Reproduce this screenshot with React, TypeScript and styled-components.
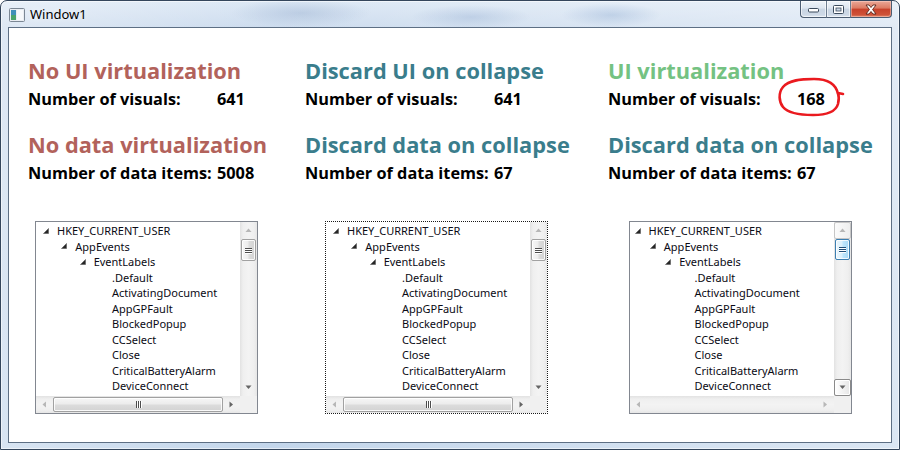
import React from 'react';
import styled, { createGlobalStyle, css } from 'styled-components';

const GlobalStyle = createGlobalStyle`
  html, body { margin: 0; padding: 0; background: #fff; }
  body { width: 900px; height: 450px; overflow: hidden; }
  * { box-sizing: border-box; }
`;

const HEAD_FONT = `"Open Sans", "Noto Sans", "DejaVu Sans", sans-serif`;
const TREE_FONT = `"Noto Sans", "Open Sans", "DejaVu Sans", sans-serif`;

type Tone = 'red' | 'teal' | 'green';
const toneColor: Record<Tone, string> = {
  red: '#b2625b',
  teal: '#3a7d8c',
  green: '#74c282',
};

/* ---------- window chrome ---------- */

const WindowFrame = styled.div`
  width: 900px;
  height: 450px;
  display: flex;
  flex-direction: column;
  border: 1px solid #34465c;
  border-radius: 7px 7px 0 0;
  overflow: hidden;
  background:
    radial-gradient(ellipse 70px 14px at 300px 12px, rgba(140, 165, 200, 0.35), transparent),
    radial-gradient(ellipse 60px 12px at 470px 16px, rgba(130, 160, 200, 0.3), transparent),
    radial-gradient(ellipse 50px 12px at 610px 14px, rgba(120, 155, 200, 0.3), transparent),
    linear-gradient(90deg, rgba(255, 255, 255, 0.35), rgba(255, 255, 255, 0) 30%, rgba(255, 255, 255, 0.25) 70%, rgba(255, 255, 255, 0.4)),
    linear-gradient(180deg, #dce8f5 0%, #cddcee 26px, #c3d6eb 100%);
  box-shadow: inset 0 0 0 1px rgba(255, 255, 255, 0.55);
`;

const TitleBar = styled.div`
  height: 26px;
  flex-shrink: 0;
  display: flex;
  align-items: flex-start;
  padding: 0 7px 0 8px;
`;

const AppIcon = styled.svg`
  width: 16px;
  height: 16px;
  margin-top: 6px;
  flex-shrink: 0;
`;

const TitleText = styled.span`
  margin: 4px 0 0 5px;
  font: 13px/18px ${TREE_FONT};
  color: #000;
  text-shadow: 0 0 6px rgba(255, 255, 255, 0.9);
`;

const CaptionButtons = styled.div`
  margin-left: auto;
  display: flex;
  height: 17px;
`;

type CaptionKind = 'min' | 'max' | 'close';
const CaptionButton = styled.div<{ $kind: CaptionKind }>`
  height: 17px;
  display: flex;
  align-items: center;
  justify-content: center;
  border: 1px solid #4b5c71;
  border-top: none;
  ${p =>
    p.$kind === 'close'
      ? css`
          width: 41px;
          border-left: none;
          border-radius: 0 0 4px 0;
          background: linear-gradient(180deg, #eaa898 0%, #dc7a62 45%, #c7412a 50%, #cf5238 85%, #e0886a 100%);
          box-shadow: inset 0 0 0 1px rgba(255, 220, 210, 0.45);
        `
      : css`
          width: ${p.$kind === 'min' ? 26 : 25}px;
          ${p.$kind === 'min' ? 'border-radius: 0 0 0 4px;' : 'border-left: 1px solid #6d7d90;'}
          ${p.$kind === 'max' ? 'border-right: 1px solid #6d7d90;' : 'border-right: none;'}
          background: linear-gradient(180deg, #eef3f9 0%, #dde6f0 45%, #c9d5e3 50%, #ced9e6 85%, #dde6f0 100%);
          box-shadow: inset 0 0 0 1px rgba(255, 255, 255, 0.6);
        `}
`;

const ClientArea = styled.main`
  flex: 1;
  margin: 0 7px 6px;
  background: #fff;
  border: 1px solid #5d6f84;
  padding: 30px 0 0 19px;
  display: grid;
  grid-template-columns: 237px 263px 264px;
  column-gap: 40px;
  align-content: start;
`;

/* ---------- stats ---------- */

const Column = styled.section`
  display: flex;
  flex-direction: column;
`;

const Heading = styled.h2<{ $tone: Tone; $gap: number }>`
  margin: ${p => p.$gap}px 0 0;
  font: 700 21.8px/26px ${HEAD_FONT};
  color: ${p => toneColor[p.$tone]};
  white-space: nowrap;
`;

const StatRow = styled.div`
  margin-top: 6px;
  display: grid;
  grid-template-columns: 189px auto;
  font: 700 16.3px/19px ${HEAD_FONT};
  color: #000;
  white-space: nowrap;
`;

const StatValue = styled.span`
  position: relative;
`;

const Annotation = styled.svg`
  position: absolute;
  left: -24px;
  top: -16px;
  width: 74px;
  height: 48px;
  overflow: visible;
  pointer-events: none;
`;

/* ---------- tree view ---------- */

const TreeBox = styled.div<{ $focused?: boolean }>`
  width: 223px;
  height: 193px;
  margin-top: 38px;
  align-self: center;
  border: 1px ${p => (p.$focused ? 'dotted #1a1a1a' : 'solid #828790')};
  background: #fff;
  display: grid;
  grid-template-columns: 1fr 17px;
  grid-template-rows: 1fr 17px;
  overflow: hidden;
`;

const TreeContent = styled.div`
  overflow: hidden;
  padding-top: 1px;
  font: 11px/15.5px ${TREE_FONT};
  color: #0a0a14;
`;

const TreeRow = styled.div`
  height: 15.5px;
  display: flex;
  align-items: center;
  white-space: nowrap;
`;

const Expander = styled.span`
  width: 16px;
  flex-shrink: 0;
  display: flex;
  align-items: center;
  padding-left: 2px;
`;

const VScroll = styled.div`
  display: flex;
  flex-direction: column;
  background: linear-gradient(90deg, #e2e2e2 0%, #efefef 18%, #f3f3f3 50%, #efefef 82%, #e6e6e6 100%);
`;

const HScroll = styled.div`
  display: flex;
  background: linear-gradient(180deg, #e2e2e2 0%, #efefef 18%, #f3f3f3 50%, #efefef 82%, #e6e6e6 100%);
`;

const Corner = styled.div`
  background: #f0f0f0;
`;

type Outline = 'none' | 'light' | 'dark';
const ArrowButton = styled.div<{ $outline: Outline }>`
  width: 17px;
  height: 17px;
  flex-shrink: 0;
  display: flex;
  align-items: center;
  justify-content: center;
  border-radius: 2px;
  ${p =>
    p.$outline === 'light' &&
    css`
      border: 1px solid #c6c6c6;
      background: linear-gradient(90deg, #fbfbfb, #eeeeee);
    `}
  ${p =>
    p.$outline === 'dark' &&
    css`
      border: 1px solid #8a8a8a;
      background: linear-gradient(90deg, #ffffff, #e6e6e6);
      box-shadow: inset 0 0 0 1px #fff;
    `}
`;

const Track = styled.div<{ $dir: 'v' | 'h' }>`
  flex: 1;
  display: flex;
  flex-direction: ${p => (p.$dir === 'v' ? 'column' : 'row')};
`;

type ThumbTone = 'gray' | 'blue';
const Thumb = styled.div<{ $dir: 'v' | 'h'; $tone: ThumbTone; $len?: number }>`
  display: flex;
  align-items: center;
  justify-content: center;
  border-radius: 2px;
  ${p =>
    p.$dir === 'v'
      ? css`
          height: ${p.$len ?? 22}px;
          margin: 0 1px;
          flex-direction: column;
          gap: 1px;
        `
      : css`
          flex: 1;
          margin: 1px 0;
          flex-direction: row;
          gap: 1px;
        `}
  ${p =>
    p.$tone === 'gray'
      ? css`
          border: 1px solid #a1a1a1;
          background: linear-gradient(${p.$dir === 'v' ? '90deg' : '180deg'}, #f6f6f6 0%, #ececec 48%, #dcdcdc 52%, #d3d3d3 100%);
          box-shadow: inset 0 0 0 1px rgba(255, 255, 255, 0.85);
        `
      : css`
          border: 1px solid #3c7fb1;
          background: linear-gradient(${p.$dir === 'v' ? '90deg' : '180deg'}, #eaf6fd 0%, #d9f0fc 48%, #bee6fd 52%, #a7d9f5 100%);
          box-shadow: inset 0 0 0 1px rgba(255, 255, 255, 0.8);
        `}
`;

/* grip line runs across the thumb: horizontal on a vertical thumb, vertical on a horizontal one */
const GripLine = styled.span<{ $dir: 'v' | 'h'; $tone: ThumbTone }>`
  display: block;
  ${p =>
    p.$dir === 'v'
      ? css`
          width: 7px;
          height: 1px;
          box-shadow: 0 1px 0 #fff;
        `
      : css`
          width: 1px;
          height: 7px;
          box-shadow: 1px 0 0 #fff;
        `}
  background: ${p => (p.$tone === 'gray' ? '#4d4d4d' : '#1f4e78')};
`;

/* ---------- small drawings ---------- */

const ExpandedGlyph = () => (
  <svg width="6" height="6" viewBox="0 0 6 6">
    <polygon points="5.5,0.5 5.5,5.5 0.5,5.5" fill="#262626" stroke="#595959" strokeWidth="0.6" />
  </svg>
);

type ArrowDir = 'up' | 'down' | 'left' | 'right';
const ScrollArrow = ({ dir, faint }: { dir: ArrowDir; faint?: boolean }) => {
  const pts: Record<ArrowDir, string> = {
    up: '0.5,4 3.5,0.5 6.5,4',
    down: '0.5,0.5 3.5,4 6.5,0.5',
    left: '4,0.5 0.5,3.5 4,6.5',
    right: '0.5,0.5 4,3.5 0.5,6.5',
  };
  const vertical = dir === 'up' || dir === 'down';
  return (
    <svg width={vertical ? 7 : 5} height={vertical ? 5 : 7} viewBox={vertical ? '0 0 7 5' : '0 0 5 7'}>
      <polygon points={pts[dir]} fill={faint ? '#a8a8a8' : '#555'} opacity={faint ? 0.8 : 0.9} />
    </svg>
  );
};

const Grip = ({ dir, tone }: { dir: 'v' | 'h'; tone: ThumbTone }) => (
  <>
    <GripLine $dir={dir} $tone={tone} />
    <GripLine $dir={dir} $tone={tone} />
    <GripLine $dir={dir} $tone={tone} />
  </>
);

/* ---------- data ---------- */

const treeItems: { depth: number; label: string; expanded?: boolean }[] = [
  { depth: 0, label: 'HKEY_CURRENT_USER', expanded: true },
  { depth: 1, label: 'AppEvents', expanded: true },
  { depth: 2, label: 'EventLabels', expanded: true },
  { depth: 3, label: '.Default' },
  { depth: 3, label: 'ActivatingDocument' },
  { depth: 3, label: 'AppGPFault' },
  { depth: 3, label: 'BlockedPopup' },
  { depth: 3, label: 'CCSelect' },
  { depth: 3, label: 'Close' },
  { depth: 3, label: 'CriticalBatteryAlarm' },
  { depth: 3, label: 'DeviceConnect' },
];

interface TreeConfig {
  focused?: boolean;
  base: number;
  indent: number;
  thumbTone: ThumbTone;
  hThumb: boolean;
  outlinedButtons: boolean;
}

interface ColumnData {
  id: string;
  top: { text: string; tone: Tone };
  visuals: string;
  circled?: boolean;
  bottom: { text: string; tone: Tone };
  dataItems: string;
  tree: TreeConfig;
}

const columns: ColumnData[] = [
  {
    id: 'plain',
    top: { text: 'No UI virtualization', tone: 'red' },
    visuals: '641',
    bottom: { text: 'No data virtualization', tone: 'red' },
    dataItems: '5008',
    tree: { base: 5, indent: 18.33, thumbTone: 'gray', hThumb: true, outlinedButtons: false },
  },
  {
    id: 'discard',
    top: { text: 'Discard UI on collapse', tone: 'teal' },
    visuals: '641',
    bottom: { text: 'Discard data on collapse', tone: 'teal' },
    dataItems: '67',
    tree: { focused: true, base: 5, indent: 18.33, thumbTone: 'gray', hThumb: true, outlinedButtons: false },
  },
  {
    id: 'virtual',
    top: { text: 'UI virtualization', tone: 'green' },
    visuals: '168',
    circled: true,
    bottom: { text: 'Discard data on collapse', tone: 'teal' },
    dataItems: '67',
    tree: { base: 3, indent: 15.33, thumbTone: 'blue', hThumb: false, outlinedButtons: true },
  },
];

/* ---------- components ---------- */

const RegistryTree = ({ cfg }: { cfg: TreeConfig }) => (
  <TreeBox $focused={cfg.focused}>
    <TreeContent>
      {treeItems.map(item => (
        <TreeRow key={item.label} style={{ paddingLeft: cfg.base + item.depth * cfg.indent }}>
          <Expander>{item.expanded && <ExpandedGlyph />}</Expander>
          <span>{item.label}</span>
        </TreeRow>
      ))}
    </TreeContent>
    <VScroll>
      <ArrowButton $outline={cfg.outlinedButtons ? 'light' : 'none'}>
        <ScrollArrow dir="up" faint />
      </ArrowButton>
      <Track $dir="v">
        <Thumb $dir="v" $tone={cfg.thumbTone} $len={cfg.thumbTone === 'blue' ? 21 : 22}>
          <Grip dir="v" tone={cfg.thumbTone} />
        </Thumb>
      </Track>
      <ArrowButton $outline={cfg.outlinedButtons ? 'dark' : 'none'}>
        <ScrollArrow dir="down" />
      </ArrowButton>
    </VScroll>
    <HScroll>
      <ArrowButton $outline="none">
        <ScrollArrow dir="left" faint />
      </ArrowButton>
      <Track $dir="h">
        {cfg.hThumb && (
          <Thumb $dir="h" $tone="gray">
            <Grip dir="h" tone="gray" />
          </Thumb>
        )}
      </Track>
      <ArrowButton $outline="none">
        <ScrollArrow dir="right" faint={!cfg.hThumb} />
      </ArrowButton>
    </HScroll>
    <Corner />
  </TreeBox>
);

const RedCircle = () => (
  <Annotation viewBox="0 0 74 48">
    <path
      d="M65 20 C63 10 54 5 41 5 C28 5 16 6 10 13 C5 19 6 28 10 33 C15 39 26 41 40 41 C54 41 63 37 65 30 C66 26 66 22 65 19 L70 20"
      fill="none"
      stroke="#ea1a1f"
      strokeWidth="2.6"
      strokeLinecap="round"
      strokeLinejoin="round"
    />
  </Annotation>
);

const StatsColumn = ({ data }: { data: ColumnData }) => (
  <Column>
    <Heading $tone={data.top.tone} $gap={0}>
      {data.top.text}
    </Heading>
    <StatRow>
      <span>Number of visuals:</span>
      <StatValue>
        {data.visuals}
        {data.circled && <RedCircle />}
      </StatValue>
    </StatRow>
    <Heading $tone={data.bottom.tone} $gap={23}>
      {data.bottom.text}
    </Heading>
    <StatRow>
      <span>Number of data items:</span>
      <span>{data.dataItems}</span>
    </StatRow>
    <RegistryTree cfg={data.tree} />
  </Column>
);

export default function App() {
  return (
    <>
      <GlobalStyle />
      <WindowFrame>
        <TitleBar>
          <AppIcon viewBox="0 0 16 16">
            <rect x="0.5" y="1.5" width="15" height="13" rx="1" fill="#e9edf2" stroke="#7b8794" />
            <rect x="2" y="3" width="5" height="10" fill="#3f8fb8" />
            <rect x="2" y="8" width="5" height="5" fill="#4aa36a" />
            <rect x="8" y="3" width="6" height="10" fill="#f7f9fb" />
          </AppIcon>
          <TitleText>Window1</TitleText>
          <CaptionButtons>
            <CaptionButton $kind="min">
              <svg width="11" height="8" viewBox="0 0 11 8">
                <rect x="0.5" y="3.5" width="10" height="3.5" rx="1" fill="#fff" stroke="#3b4a5c" />
              </svg>
            </CaptionButton>
            <CaptionButton $kind="max">
              <svg width="11" height="9" viewBox="0 0 11 9">
                <rect x="0.5" y="0.5" width="10" height="8" rx="1" fill="#fff" stroke="#3b4a5c" />
                <rect x="3" y="3" width="5" height="3" fill="#c9d5e3" stroke="#3b4a5c" strokeWidth="0.8" />
              </svg>
            </CaptionButton>
            <CaptionButton $kind="close">
              <svg width="14" height="11" viewBox="0 0 14 11">
                <path
                  d="M2 1 L5 1 L7 3.5 L9 1 L12 1 L8.6 5.5 L12 10 L9 10 L7 7.5 L5 10 L2 10 L5.4 5.5 Z"
                  fill="#fff"
                  stroke="#5a2418"
                  strokeWidth="0.9"
                  strokeLinejoin="round"
                />
              </svg>
            </CaptionButton>
          </CaptionButtons>
        </TitleBar>
        <ClientArea>
          {columns.map(col => (
            <StatsColumn key={col.id} data={col} />
          ))}
        </ClientArea>
      </WindowFrame>
    </>
  );
}
